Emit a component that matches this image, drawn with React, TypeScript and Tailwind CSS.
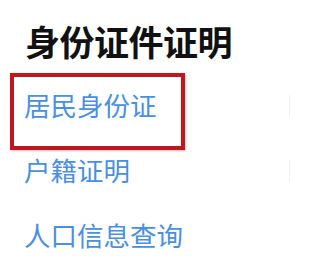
const items = ['居民身份证', '户籍证明', '人口信息查询'];

export default function App() {
  return (
    <div
      className="w-[317px] h-[262px] bg-white overflow-hidden"
      style={{ fontFamily: '"Noto Sans CJK SC", "Noto Sans", sans-serif' }}
    >
      <h1 className="pl-[25px] pt-[21px] text-[35px] leading-[40px] font-bold text-[#111111] tracking-[-0.5px]">
        身份证件证明
      </h1>
      <div className="mt-[12px]">
        {items.map((item, i) => (
          <div key={item} className="relative h-[65px] flex items-center pl-[24px]">
            <span className="text-[26.5px] leading-none text-[#4a8fe0]">{item}</span>
            {i < 2 && <div className="absolute right-[27px] top-[22px] w-px h-[22px] bg-[#f0f0f0]" />}
            {i === 0 && (
              <div className="absolute left-[10px] top-0 w-[175px] h-[77px] border-[4px] border-[#c0161e] shadow-[1px_1px_2px_rgba(0,0,0,0.25)]" />
            )}
          </div>
        ))}
      </div>
    </div>
  );
}
